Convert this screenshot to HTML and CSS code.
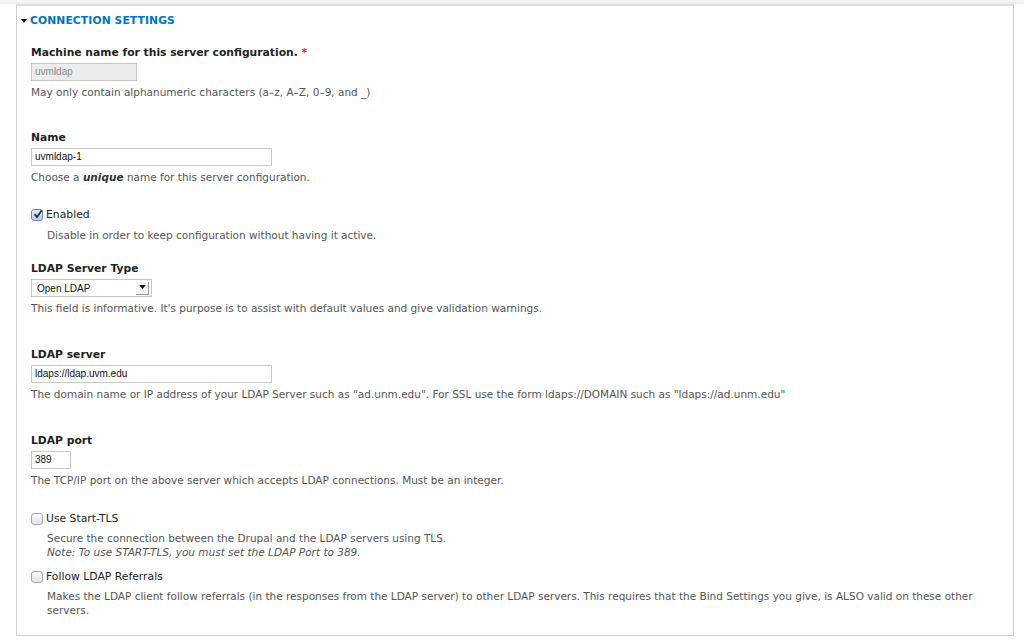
FILE: index.html
```html
<!DOCTYPE html>
<html>
<head>
<meta charset="utf-8">
<link rel="stylesheet" href="styles.css">
</head>
<body>
<div class="topbar"></div>
<fieldset class="panel">
  <legend class="legend"><span class="tri"></span>CONNECTION SETTINGS</legend>
  <div class="fields">
    <div class="item">
      <label class="label">Machine name for this server configuration. <span class="req">*</span></label>
      <div class="input disabled w-machine">uvmldap</div>
      <div class="desc">May only contain alphanumeric characters (a–z, A–Z, 0–9, and _)</div>
    </div>
    <div class="item gap-lg">
      <label class="label">Name</label>
      <div class="input w-wide">uvmldap-1</div>
      <div class="desc">Choose a <em class="strong-em">unique</em> name for this server configuration.</div>
    </div>
    <div class="item check-item gap-md">
      <div class="check-row"><span class="cb checked"><svg viewBox="0 0 12 12" width="12" height="12"><path d="M2.5 6.2 L5 9 L9.8 2.2" fill="none" stroke="#1d2f55" stroke-width="1.8"/></svg></span><span class="check-label">Enabled</span></div>
      <div class="desc indent indent-first">Disable in order to keep configuration without having it active.</div>
    </div>
    <div class="item gap-after-check">
      <label class="label">LDAP Server Type</label>
      <div class="select"><span class="select-text">Open LDAP</span><span class="arrow"><svg viewBox="0 0 8 6" width="7" height="5"><path d="M0 0 H8 L4 5 Z" fill="#111"/></svg></span></div>
      <div class="desc">This field is informative. It's purpose is to assist with default values and give validation warnings.</div>
    </div>
    <div class="item gap-lg2">
      <label class="label">LDAP server</label>
      <div class="input w-wide">ldaps://ldap.uvm.edu</div>
      <div class="desc">The domain name or IP address of your LDAP Server such as "ad.unm.edu". For SSL use the form ldaps://DOMAIN such as "ldaps://ad.unm.edu"</div>
    </div>
    <div class="item gap-lg2">
      <label class="label">LDAP port</label>
      <div class="input w-port">389</div>
      <div class="desc">The TCP/IP port on the above server which accepts LDAP connections. Must be an integer.</div>
    </div>
    <div class="item check-item gap-tls">
      <div class="check-row"><span class="cb"></span><span class="check-label">Use Start-TLS</span></div>
      <div class="desc indent">Secure the connection between the Drupal and the LDAP servers using TLS.<br><em>Note: To use START-TLS, you must set the LDAP Port to 389.</em></div>
    </div>
    <div class="item check-item gap-sm">
      <div class="check-row"><span class="cb"></span><span class="check-label">Follow LDAP Referrals</span></div>
      <div class="desc indent">Makes the LDAP client follow referrals (in the responses from the LDAP server) to other LDAP servers. This requires that the Bind Settings you give, is ALSO valid on these other servers.</div>
    </div>
  </div>
</fieldset>
</body>
</html>
```
FILE: styles.css
```css
html, body {
  margin: 0;
  padding: 0;
  background: #ffffff;
}
body {
  font-family: "DejaVu Sans", Verdana, sans-serif;
  font-size: 11px;
  color: #333;
}
.topbar {
  height: 4px;
  background: linear-gradient(#f7f7f7, #ececec);
}
.panel {
  margin: 0 10px 0 16px;
  border: 1px solid #cfcfcf;
  border-top: 2px solid #dedede;
  padding: 0 14px 22px 14px;
  height: 632px;
  box-sizing: border-box;
  position: relative;
}
.legend {
  position: absolute;
  top: 8px;
  left: 4px;
  padding: 0;
  color: #0074bd;
  font-weight: bold;
  font-size: 10.75px;
  letter-spacing: 0.1px;
  display: flex;
  align-items: center;
}
.tri {
  width: 0;
  height: 0;
  border-left: 3.5px solid transparent;
  border-right: 3.5px solid transparent;
  border-top: 4px solid #111;
  margin-right: 3px;
}
.fields {
  padding-top: 39px;
  display: flex;
  flex-direction: column;
}
.item {
  display: flex;
  flex-direction: column;
  align-items: flex-start;
}
.gap-lg { margin-top: 31px; }
.gap-lg2 { margin-top: 32px; }
.gap-md { margin-top: 23px; }
.gap-after-check { margin-top: 19px; }
.gap-tls { margin-top: 24px; }
.gap-sm { margin-top: 10px; }
.label {
  font-weight: bold;
  font-size: 10.75px;
  color: #222;
  line-height: 16px;
  margin-bottom: 2px;
}
.req { color: #e0291a; }
.input {
  box-sizing: border-box;
  height: 18px;
  border: 1px solid #c8c8c8;
  font-family: "Liberation Sans", Arial, sans-serif;
  font-size: 10px;
  line-height: 16px;
  padding: 0 3px;
  color: #111;
  background: #fff;
}
.input.disabled {
  background: #ececec;
  color: #888;
}
.w-machine { width: 106px; }
.w-wide { width: 241px; }
.w-port { width: 40px; }
.desc {
  color: #555;
  font-size: 10.5px;
  line-height: 14px;
  margin-top: 4px;
  max-width: 960px;
}
.desc em { font-style: italic; }
.strong-em { font-weight: bold; color: #333; }
.indent { margin-left: 16px; margin-top: 4px; }
.indent-first { margin-top: 5px; }
.check-row {
  display: flex;
  align-items: center;
  gap: 3px;
  line-height: 16px;
}
.check-label {
  font-size: 10.8px;
  color: #222;
}
.cb {
  width: 10px;
  height: 10px;
  border: 1px solid #a9a9a9;
  border-radius: 3px;
  background: linear-gradient(#fdfdfd, #e4e4e4);
  position: relative;
}
.cb.checked {
  background: linear-gradient(#e7effa, #b9cbe8);
  border-color: #6f86b2;
}
.cb svg {
  position: absolute;
  left: 0;
  top: -2px;
}
.select {
  box-sizing: border-box;
  width: 121px;
  height: 18px;
  border: 1px solid #c8c8c8;
  display: flex;
  align-items: center;
  justify-content: space-between;
  padding-left: 5px;
  font-family: "Liberation Sans", Arial, sans-serif;
  font-size: 10px;
  color: #111;
}
.arrow {
  width: 12px;
  height: 12px;
  margin-right: 2px;
  border-right: 1px solid #999;
  border-bottom: 1px solid #999;
  background: #f4f4f4;
  display: flex;
  align-items: center;
  justify-content: center;
}
```
